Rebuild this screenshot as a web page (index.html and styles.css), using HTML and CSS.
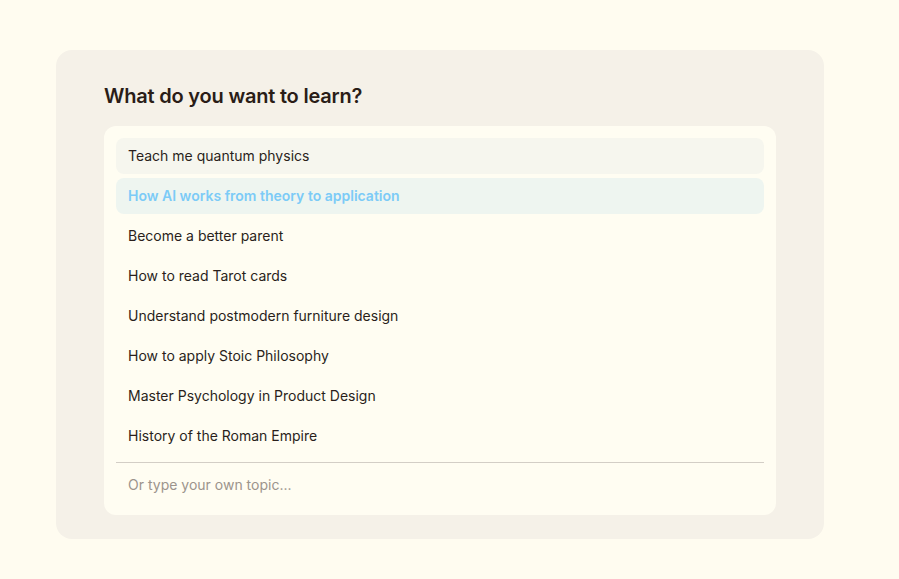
FILE: index.html
```html
<!DOCTYPE html>
<html lang="en">
<head>
<meta charset="utf-8">
<title>What do you want to learn?</title>
<link rel="stylesheet" href="styles.css">
</head>
<body>
<main class="page">
  <section class="card">
    <h1 class="title">What do you want to learn?</h1>
    <div class="panel">
      <ul class="options">
        <li class="option option-hover">Teach me quantum physics</li>
        <li class="option option-active">How AI works from theory to application</li>
        <li class="option">Become a better parent</li>
        <li class="option">How to read Tarot cards</li>
        <li class="option">Understand postmodern furniture design</li>
        <li class="option">How to apply Stoic Philosophy</li>
        <li class="option">Master Psychology in Product Design</li>
        <li class="option">History of the Roman Empire</li>
      </ul>
      <div class="divider"></div>
      <input class="custom" type="text" placeholder="Or type your own topic...">
    </div>
  </section>
</main>
</body>
</html>
```

FILE: styles.css
```css
* { box-sizing: border-box; }
html, body { margin: 0; padding: 0; }
body {
  background: #fffcf0;
  font-family: Inter, "Noto Sans", sans-serif;
  color: #2a1f1b;
  width: 899px;
  height: 579px;
  overflow: hidden;
}
.page {
  padding: 50px 0 0 56px;
}
.card {
  width: 768px;
  height: 489px;
  background: #f5f1e8;
  border-radius: 16px;
  padding: 32px 48px 24px;
}
.title {
  margin: 0 0 16px;
  font-size: 20px;
  line-height: 28px;
  font-weight: 600;
  color: #2a1d17;
  letter-spacing: -0.2px;
}
.panel {
  background: #fffdf2;
  border-radius: 12px;
  padding: 12px 12px 10px;
  display: flex;
  flex-direction: column;
}
.options {
  list-style: none;
  margin: 0;
  padding: 0;
  display: flex;
  flex-direction: column;
  gap: 4px;
}
.option {
  height: 36px;
  line-height: 36px;
  padding: 0 12px;
  border-radius: 8px;
  font-size: 14px;
  color: #2a1f1b;
}
.option-hover { background: #f6f6ee; }
.option-active {
  background: #eef5f0;
  color: #7ccbf7;
  font-weight: 600;
}
.divider {
  height: 1px;
  background: #d3cec6;
  margin-top: 8px;
}
.custom {
  border: none;
  outline: none;
  background: transparent;
  height: 42px;
  padding: 0 12px;
  font-family: inherit;
  font-size: 14px;
  color: #2a1f1b;
}
.custom::placeholder { color: #9c948c; }
```
